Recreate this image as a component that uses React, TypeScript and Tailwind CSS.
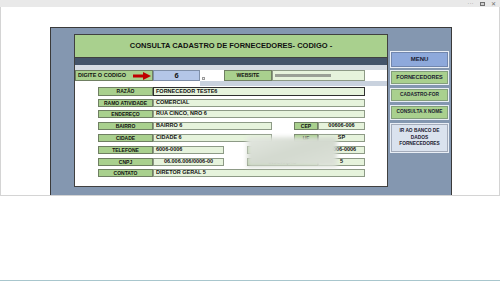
import React from 'react';

const font = "font-['Liberation_Sans',Arial,sans-serif]";

// Label cell (green) used in the form rows
const Label = ({ text, w = 'w-[55px]' }: { text: string; w?: string }) => (
  <div className={`${w} h-full bg-[#a9d08e] border border-[#6f7f62] flex items-center justify-center text-[5px] font-bold text-[#111] leading-none`}>
    {text}
  </div>
);

// Value cell (light green)
const Value = ({ text, w, center, strong }: { text: string; w: string; center?: boolean; strong?: boolean }) => (
  <div
    className={`${w} h-full bg-[#e6f3dc] border ${strong ? 'border-[#2f2f2f]' : 'border-[#8d9a86]'} flex items-center ${center ? 'justify-center' : 'pl-[2px]'} text-[5.5px] font-bold text-[#111] leading-none`}
  >
    {text}
  </div>
);

const SideButton = ({ text, h, bg, size = 'text-[5px]' }: { text: React.ReactNode; h: string; bg: string; size?: string }) => (
  <div className={`${h} ${bg} border border-[#e9eef5] shadow-[inset_0_0_0_1px_rgba(60,70,90,0.35)] flex items-center justify-center text-center font-bold text-[#1a2030] leading-[1.35] ${size}`}>
    {text}
  </div>
);

export default function App() {
  return (
    <div className={`w-[500px] h-[281px] bg-white flex flex-col overflow-hidden ${font}`}>
      {/* window top bar */}
      <div className="h-[7px] bg-[#e9e9e9] flex items-center justify-end gap-[6px] pr-[4px] text-[#707070]">
        <span className="text-[5px] leading-none tracking-[0.5px]">···</span>
        <span className="w-[5px] h-[4px] border border-[#707070] bg-[#cfcfcf]" />
        <span className="text-[6px] leading-none">✕</span>
      </div>

      {/* sheet area */}
      <div className="h-[189px] border-x border-b border-[#d4d4d4] pl-[49px] pt-[20px]">
        <div className="w-[402px] h-[168px] bg-[#8497b0] border-x border-t border-[#3a3a3a] flex pl-[23px] pt-[6px]">
          {/* main card */}
          <div className="relative w-[314px] h-[153px] bg-white border border-[#404040] flex flex-col">
            <div className="h-[23px] bg-[#a9d08e] border-b border-[#404040] flex items-center justify-center text-[7.5px] font-bold text-[#111]">
              CONSULTA CADASTRO DE FORNECEDORES- CODIGO -
            </div>
            <div className="h-[7px] bg-[#44546a]" />
            <div className="h-[5px] bg-[#d6dce4]" />

            {/* codigo row */}
            <div className="h-[11px] flex">
              <div className="w-[78px] h-full bg-[#a9d08e] border border-[#6f7f62] flex items-center justify-between pl-[2px] pr-[1px]">
                <span className="text-[5.5px] font-bold text-[#111] leading-none">DIGITE O CODIGO</span>
                <svg width="18" height="8" viewBox="0 0 18 8">
                  <rect x="0" y="2.5" width="11" height="3" fill="#c00000" />
                  <polygon points="10,0 18,4 10,8" fill="#c00000" />
                </svg>
              </div>
              <div className="w-[47px] h-full bg-[#b4c6e7] border border-[#7f8fa8] flex items-center justify-center text-[7.5px] font-bold text-[#111]">
                6
              </div>
              <div className="w-[23px] h-full bg-white flex items-end pl-[2px] pb-[1px]">
                <span className="w-[3px] h-[3px] border border-[#9a9a9a] bg-[#f2f2f2]" />
              </div>
              <div className="w-[1px]" />
              <Label text="WEBSITE" w="w-[48px]" />
              <div className="w-[93px] h-full bg-[#e6f3dc] border border-[#8d9a86] flex items-center pl-[2px]">
                <span className="w-[56px] h-[3px] bg-[#9aa096] blur-[0.6px]" />
              </div>
            </div>

            <div className="h-[5px] flex">
              <div className="w-[125px]" />
              <div className="flex-1 bg-[#c9d2de]" />
            </div>

            {/* form rows */}
            <div className="flex flex-col gap-[3px] pl-[23px] pt-[1px]">
              <div className="h-[9px] flex">
                <Label text="RAZÃO" />
                <Value text="FORNECEDOR TESTE6" w="w-[212px]" strong />
              </div>
              <div className="h-[8px] flex">
                <Label text="RAMO ATIVIDADE" />
                <Value text="COMERCIAL" w="w-[212px]" />
              </div>
              <div className="h-[8px] flex">
                <Label text="ENDEREÇO" />
                <Value text="RUA CINCO, NRO 6" w="w-[212px]" />
              </div>
              <div className="h-[8px] flex mt-[1px]">
                <Label text="BAIRRO" />
                <Value text="BAIRRO 6" w="w-[119px]" />
                <div className="w-[22px]" />
                <Label text="CEP" w="w-[24px]" />
                <Value text="00606-006" w="w-[47px]" center />
              </div>
              <div className="h-[8px] flex mt-[1px]">
                <Label text="CIDADE" />
                <Value text="CIDADE 6" w="w-[119px]" />
                <div className="w-[22px]" />
                <Label text="UF" w="w-[24px]" />
                <Value text="SP" w="w-[47px]" center />
              </div>
              <div className="h-[8px] flex mt-[1px]">
                <Label text="TELEFONE" />
                <Value text="6006-0006" w="w-[71px]" />
                <div className="w-[23px]" />
                <Label text="CELULAR" w="w-[71px]" />
                <Value text="99006-0006" w="w-[47px]" center />
              </div>
              <div className="h-[8px] flex mt-[1px]">
                <Label text="CNPJ" />
                <Value text="06.006.006/0006-00" w="w-[71px]" center />
                <div className="w-[23px]" />
                <Label text="INSCRIÇÃO" w="w-[71px]" />
                <Value text="5" w="w-[47px]" center />
              </div>
              <div className="h-[8px] flex">
                <Label text="CONTATO" />
                <Value text="DIRETOR GERAL 5" w="w-[212px]" />
              </div>
            </div>

            {/* blurred patch over the sheet */}
            <div className="absolute left-[172px] top-[102px] w-[90px] h-[30px] bg-gradient-to-br from-[#e3e7e0] via-[#d3d9cf] to-[#dde2d9] blur-[2px]" />
          </div>

          {/* side menu */}
          <div className="ml-[2px] mt-[17px] w-[59px] flex flex-col">
            <SideButton text="MENU" h="h-[17px]" bg="bg-[#8ea9db]" size="text-[6px]" />
            <div className="h-[2px]" />
            <SideButton text="FORNECEDORES" h="h-[15px]" bg="bg-[#a9d08e]" size="text-[5.5px]" />
            <div className="h-[3px]" />
            <SideButton text="CADASTRO-FOR" h="h-[14px]" bg="bg-[#a9d08e]" size="text-[4.8px]" />
            <div className="h-[3px]" />
            <SideButton text="CONSULTA X NOME" h="h-[15px]" bg="bg-[#a9d08e]" size="text-[4.8px]" />
            <div className="h-[3px]" />
            <SideButton
              text={<>IR AO BANCO DE<br />DADOS<br />FORNECEDORES</>}
              h="h-[30px]"
              bg="bg-[#dae2ee]"
              size="text-[4.8px]"
            />
          </div>
        </div>
      </div>

      <div className="flex-1" />
      <div className="h-[1px] bg-[#a8c6cd]" />
    </div>
  );
}
